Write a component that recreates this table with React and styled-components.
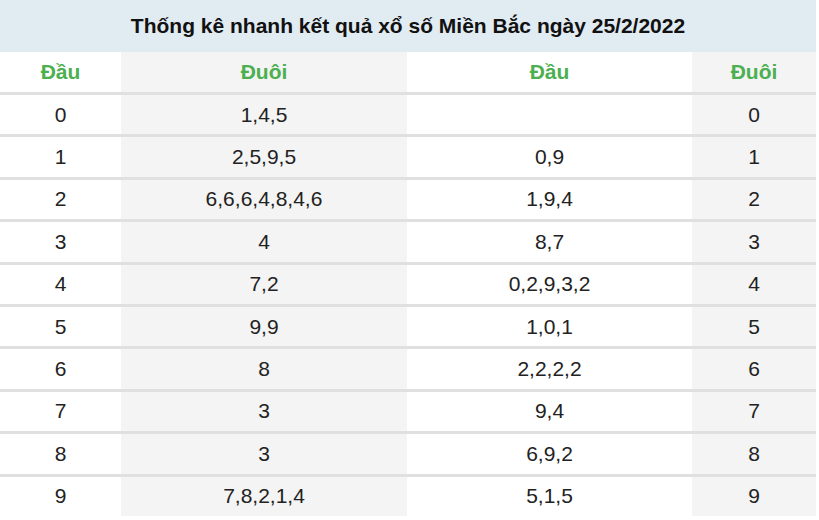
import React from "react";
import styled, { createGlobalStyle } from "styled-components";

const GlobalStyle = createGlobalStyle`
  body {
    margin: 0;
    background: #fff;
    font-family: "Liberation Sans", Arial, sans-serif;
  }
`;

const Wrap = styled.div`
  width: 816px;
`;

const Title = styled.div`
  height: 52px;
  background: #e1ebf2;
  display: flex;
  align-items: center;
  justify-content: center;
  font-size: 21px;
  font-weight: bold;
  color: #111;
`;

const Table = styled.table`
  width: 816px;
  border-collapse: collapse;
  table-layout: fixed;
  font-size: 21px;
  color: #222;
`;

const Col = styled.col`
  width: ${(p) => p.w}px;
`;

const Head = styled.th`
  height: 40px;
  padding: 0;
  color: #4caf50;
  font-weight: bold;
  text-align: center;
  background: ${(p) => (p.$shade ? "#f4f4f4" : "#fff")};
`;

const Row = styled.tr`
  border-top: 3px solid #e0e0e0;
`;

const Cell = styled.td`
  height: 39.4px;
  padding: 0;
  text-align: center;
  background: ${(p) => (p.$shade ? "#f4f4f4" : "#fff")};
`;

const rows = [
  ["0", "1,4,5", "", "0"],
  ["1", "2,5,9,5", "0,9", "1"],
  ["2", "6,6,6,4,8,4,6", "1,9,4", "2"],
  ["3", "4", "8,7", "3"],
  ["4", "7,2", "0,2,9,3,2", "4"],
  ["5", "9,9", "1,0,1", "5"],
  ["6", "8", "2,2,2,2", "6"],
  ["7", "3", "9,4", "7"],
  ["8", "3", "6,9,2", "8"],
  ["9", "7,8,2,1,4", "5,1,5", "9"],
];

export default function App() {
  return (
    <Wrap>
      <GlobalStyle />
      <Title>Thống kê nhanh kết quả xổ số Miền Bắc ngày 25/2/2022</Title>
      <Table>
        <colgroup>
          <Col w={121} />
          <Col w={286} />
          <Col w={285} />
          <Col w={124} />
        </colgroup>
        <thead>
          <tr>
            <Head>Đầu</Head>
            <Head $shade>Đuôi</Head>
            <Head>Đầu</Head>
            <Head $shade>Đuôi</Head>
          </tr>
        </thead>
        <tbody>
          {rows.map((r) => (
            <Row key={r[0]}>
              {r.map((v, i) => (
                <Cell key={i} $shade={i % 2 === 1}>
                  {v}
                </Cell>
              ))}
            </Row>
          ))}
        </tbody>
      </Table>
    </Wrap>
  );
}
